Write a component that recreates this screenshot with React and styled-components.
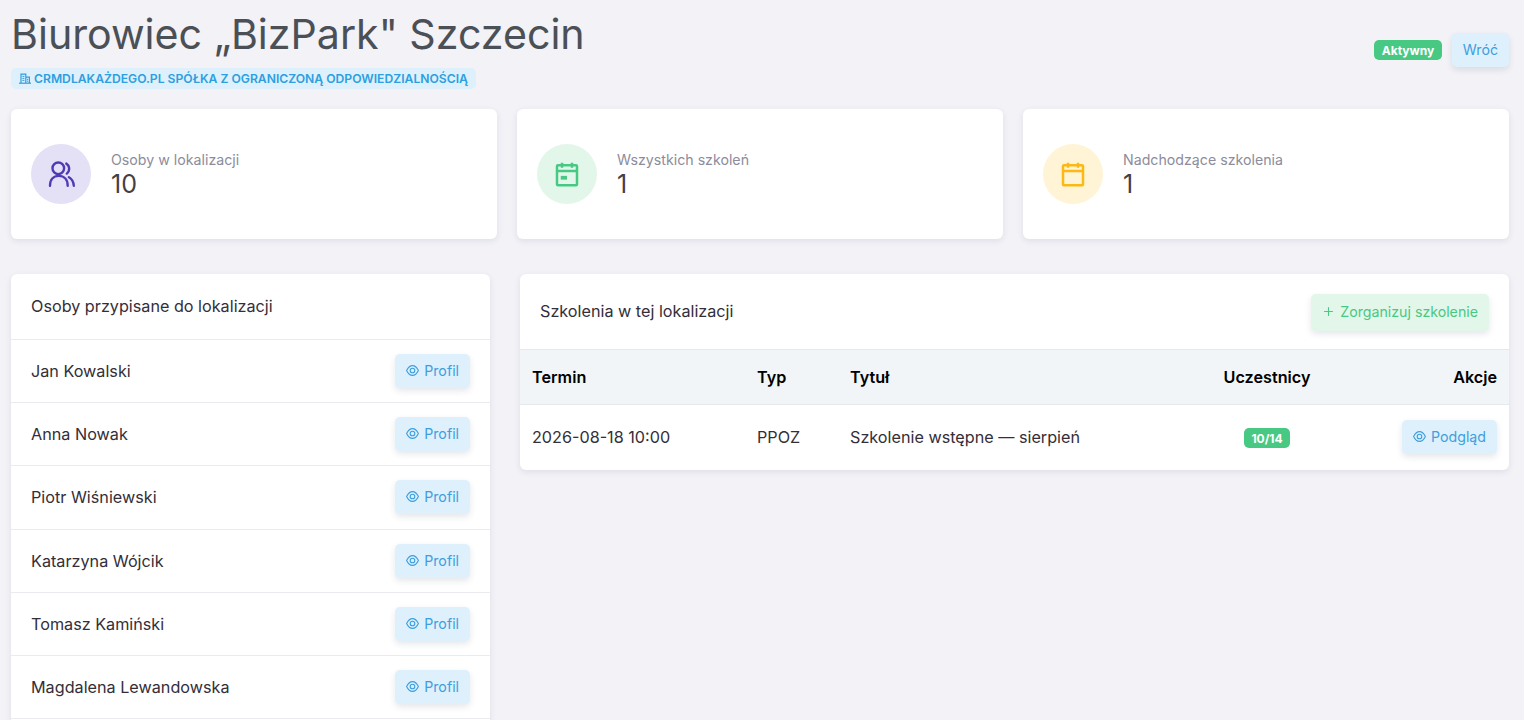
import React from "react";
import styled, { createGlobalStyle } from "styled-components";

const Global = createGlobalStyle`
  html, body { margin: 0; padding: 0; height: 720px; overflow: hidden; background: #f2f2f7; }
  body { font-family: Inter, "Noto Sans", sans-serif; font-size: 16.2px; color: #332e38; }
  * { box-sizing: border-box; }
`;

const Page = styled.div`
  padding: 0 15px 0 11px;
  height: 720px;
  overflow: hidden;
`;
const Head = styled.header`
  display: flex;
  justify-content: space-between;
  align-items: center;
  height: 109px;
  padding: 10px 0 20px;
`;
const Title = styled.h1`
  margin: 0 0 10px;
  font-size: 41.15px;
  line-height: 48px;
  font-weight: 400;
  color: #4b4f56;
`;
const Company = styled.span`
  display: inline-flex;
  align-items: center;
  gap: 3px;
  height: 21px;
  padding: 0 8px;
  border-radius: 5px;
  background: #def0fb;
  color: #2d9fe0;
  font-size: 12.17px;
  font-weight: 600;
`;
const HeadActions = styled.div`
  display: flex;
  align-items: center;
  gap: 10px;
  margin-top: 1px;
`;
const Badge = styled.span`
  display: inline-flex;
  align-items: center;
  justify-content: center;
  height: 20px;
  padding: 0 7.5px;
  border-radius: 5px;
  background: #47c983;
  color: #fff;
  font-size: 12px;
  font-weight: 700;
`;
const Button = styled.button`
  display: inline-flex;
  align-items: center;
  justify-content: center;
  gap: 5px;
  height: ${p => (p.$green ? "37px" : "34px")};
  padding: 0 11px 1px;
  border: 0;
  border-radius: 5px;
  font: 400 14.2px Inter, sans-serif;
  background: ${p => (p.$green ? "#e3f6ea" : "#def0fb")};
  color: ${p => (p.$green ? "#47c983" : "#3d9fdf")};
  box-shadow: 0 3px 6px rgba(50, 60, 90, 0.12);
`;
const Stats = styled.section`
  display: grid;
  grid-template-columns: repeat(3, 486px);
  column-gap: 20px;
  margin-bottom: 35px;
`;
const Card = styled.div`
  background: #fff;
  border-radius: 6px;
  box-shadow: 0 2px 6px rgba(50, 60, 90, 0.1);
`;
const StatCard = styled(Card)`
  display: flex;
  align-items: center;
  gap: 20px;
  height: 130px;
  padding: 0 20px;
`;
const StatIcon = styled.div`
  width: 60px;
  height: 60px;
  border-radius: 50%;
  display: flex;
  align-items: center;
  justify-content: center;
  background: ${p => p.$bg};
  color: ${p => p.$fg};
`;
const StatLabel = styled.div`
  font-size: 14.2px;
  line-height: 20px;
  color: #8c8c9c;
`;
const StatValue = styled.div`
  font-size: 25px;
  line-height: 28px;
  color: #433f48;
`;
const Lower = styled.section`
  display: grid;
  grid-template-columns: 479px 989px;
  column-gap: 30px;
  align-items: start;
`;
const ListHeader = styled.h2`
  margin: 0;
  height: 65.75px;
  padding: 0 20px 1px;
  display: flex;
  align-items: center;
  font-size: 16.2px;
  font-weight: 400;
  color: #332e38;
  border-bottom: 1px solid #e9ebee;
`;
const Row = styled.div`
  display: flex;
  align-items: center;
  justify-content: space-between;
  height: 63.25px;
  padding: 0 20px;
  font-size: 16.2px;
  color: #332e38;
  border-bottom: 1px solid #e9ebee;
`;
const ListCard = styled(Card)`
  padding-bottom: 24px;
`;
const TableHeader = styled.div`
  display: flex;
  align-items: center;
  justify-content: space-between;
  height: 75px;
  padding: 1px 20px 0;
  font-size: 16.2px;
  color: #332e38;
`;
const TableTitle = styled.span`
  padding-bottom: 3px;
`;
const Table = styled.table`
  width: 100%;
  border-collapse: collapse;
  font-size: 16.2px;
`;
const Th = styled.th`
  height: 55px;
  padding: 0 12px 1px;
  background: #f1f5f8;
  border-top: 1px solid #e6e9ec;
  border-bottom: 1px solid #e6e9ec;
  color: #000;
  font-weight: 600;
  text-align: ${p => p.$align || "left"};
  width: ${p => p.$w};
`;
const Td = styled.td`
  height: 65px;
  padding: 0 12px;
  color: #332e38;
  text-align: ${p => p.$align || "left"};
`;

const UsersIcon = () => (
  <svg width="30" height="30" viewBox="0 0 30 30" fill="none" stroke="currentColor" strokeWidth="2.4" strokeLinecap="round">
    <circle cx="12.3" cy="9.3" r="5.8" />
    <path d="M4 26.7C4 20.5 7.5 16.9 12.8 16.9S21.7 20.5 21.7 26.7" />
    <path d="M20.3 4.6C23.6 6.6 24.4 11.5 20.8 14.6" />
    <path d="M22.9 18.2C26 20 27.6 23 27.8 26.7" />
  </svg>
);
const CalendarIcon = ({ event }) => (
  <svg width="30" height="30" viewBox="0 0 24 24" fill="none" stroke="currentColor" strokeWidth="2" strokeLinecap="butt">
    <rect x="4" y="5" width="16" height="16" rx="0.8" />
    <path d="M8 3v4M16 3v4M4 9.5h16" />
    {event && <rect x="7" y="13.5" width="5" height="3" fill="currentColor" stroke="none" />}
  </svg>
);
const EyeIcon = () => (
  <svg width="13" height="11" viewBox="0 0 13 11" fill="none" stroke="currentColor" strokeWidth="1.1">
    <path d="M.6 5.5C2.3 2 4.4.6 6.5.6S10.7 2 12.4 5.5C10.7 9 8.6 10.4 6.5 10.4S2.3 9 .6 5.5Z" />
    <circle cx="6.5" cy="5.5" r="2.3" />
  </svg>
);
const PlusIcon = () => (
  <svg width="13" height="13" viewBox="0 0 13 13" fill="none" stroke="currentColor" strokeWidth="1.1" strokeLinecap="round">
    <path d="M6.5 2.5v8M2.5 6.5h8" />
  </svg>
);
const BuildingIcon = () => (
  <svg width="12" height="11" viewBox="0 0 12 11" fill="none" stroke="currentColor" strokeWidth="1.2">
    <path d="M0 10.2h12" />
    <path d="M2 10V1.1h4.8V10M6.8 4.2h3.6V10" />
    <path d="M3.4 3.4h2M3.4 5.4h2M3.4 7.4h2M8 6.4h1.2M8 8.2h1.2" strokeWidth="1" />
  </svg>
);

const people = ["Jan Kowalski", "Anna Nowak", "Piotr Wiśniewski", "Katarzyna Wójcik", "Tomasz Kamiński", "Magdalena Lewandowska"];

export default function App() {
  return (
    <Page>
      <Global />
      <Head>
        <div>
          <Title>Biurowiec „BizPark" Szczecin</Title>
          <Company><BuildingIcon />CRMDLAKAŻDEGO.PL SPÓŁKA Z OGRANICZONĄ ODPOWIEDZIALNOŚCIĄ</Company>
        </div>
        <HeadActions>
          <Badge>Aktywny</Badge>
          <Button>Wróć</Button>
        </HeadActions>
      </Head>
      <Stats>
        <StatCard>
          <StatIcon $bg="#e4e0f5" $fg="#4f3bb5"><UsersIcon /></StatIcon>
          <div><StatLabel>Osoby w lokalizacji</StatLabel><StatValue>10</StatValue></div>
        </StatCard>
        <StatCard>
          <StatIcon $bg="#e3f6ea" $fg="#47c983"><CalendarIcon event /></StatIcon>
          <div><StatLabel>Wszystkich szkoleń</StatLabel><StatValue>1</StatValue></div>
        </StatCard>
        <StatCard>
          <StatIcon $bg="#fff4d6" $fg="#fdb913"><CalendarIcon /></StatIcon>
          <div><StatLabel>Nadchodzące szkolenia</StatLabel><StatValue>1</StatValue></div>
        </StatCard>
      </Stats>
      <Lower>
        <ListCard>
          <ListHeader>Osoby przypisane do lokalizacji</ListHeader>
          {people.map(n => (
            <Row key={n}>{n}<Button><EyeIcon />Profil</Button></Row>
          ))}
        </ListCard>
        <Card>
          <TableHeader>
            <TableTitle>Szkolenia w tej lokalizacji</TableTitle>
            <Button $green><PlusIcon />Zorganizuj szkolenie</Button>
          </TableHeader>
          <Table>
            <thead>
              <tr>
                <Th $w="225px">Termin</Th>
                <Th $w="93px">Typ</Th>
                <Th>Tytuł</Th>
                <Th $align="center" $w="150px">Uczestnicy</Th>
                <Th $align="right" $w="167px">Akcje</Th>
              </tr>
            </thead>
            <tbody>
              <tr>
                <Td>2026-08-18 10:00</Td>
                <Td>PPOZ</Td>
                <Td>Szkolenie wstępne — sierpień</Td>
                <Td $align="center"><Badge>10/14</Badge></Td>
                <Td $align="right"><Button><EyeIcon />Podgląd</Button></Td>
              </tr>
            </tbody>
          </Table>
        </Card>
      </Lower>
    </Page>
  );
}
